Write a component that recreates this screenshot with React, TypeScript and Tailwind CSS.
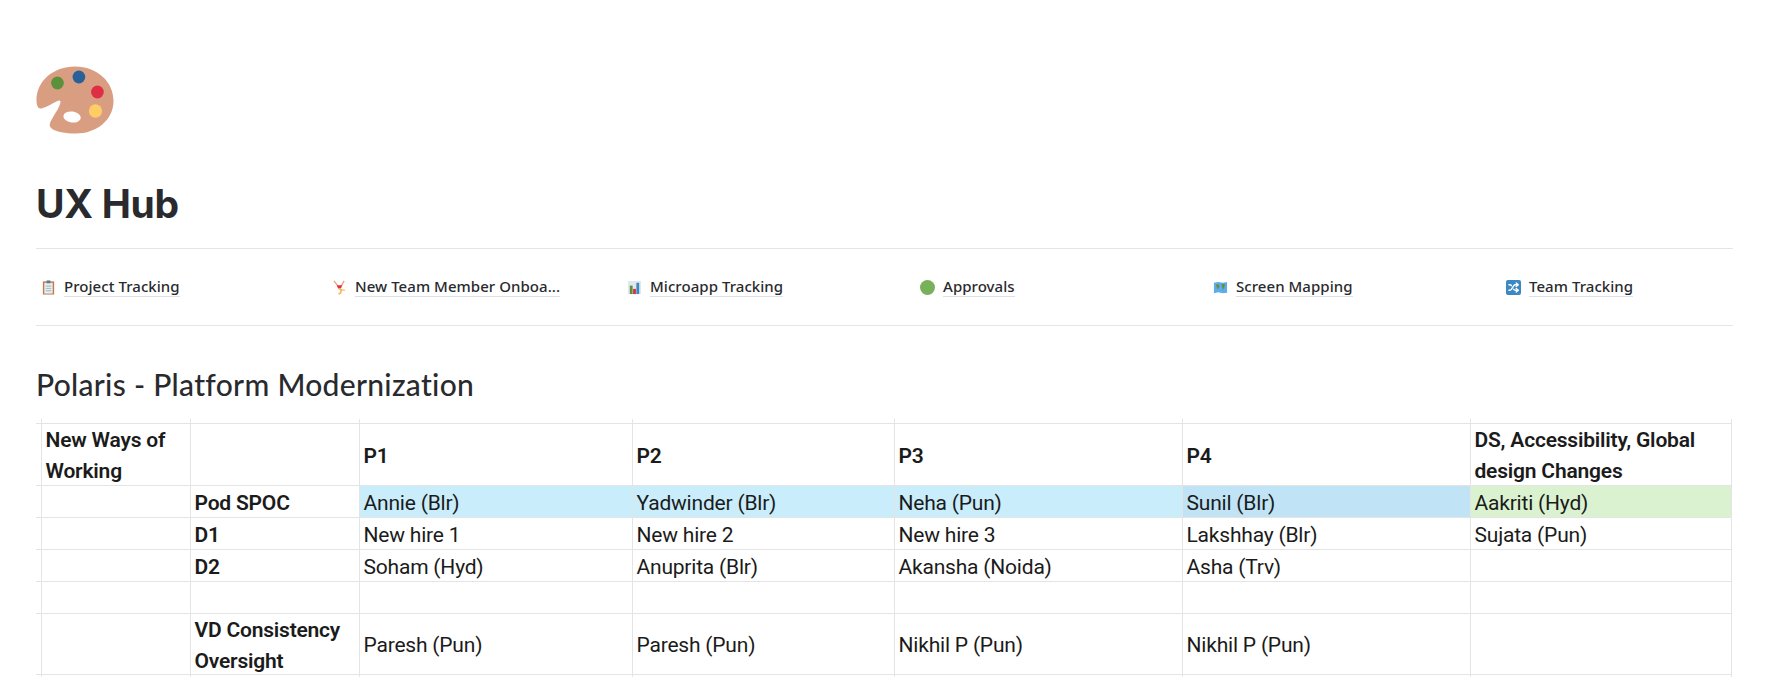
import React from 'react';
import { Shuffle } from 'lucide-react';

const Palette = () => (
  <svg viewBox="0 0 80 68" preserveAspectRatio="none" className="w-[78px] h-[68px]">
    <path
      d="M0.5 35C0 15 18 0.5 40 0.5C63 0.5 79.5 16 79.5 35C79.5 54 62 67.5 41 67.5C30 67.5 20 66 15.5 62C13 59.5 14 57 17 52C20 47 24 41 25 37C25.5 34 24 34 21 35.5C16 38 9 42 5 42.5C2 43 0.7 39 0.5 35Z"
      fill="#d99e82"
    />
    <ellipse cx="37" cy="51" rx="9" ry="5.5" fill="#fff" transform="rotate(8 37 51)" />
    <circle cx="22" cy="17" r="6.5" fill="#5c913b" />
    <circle cx="44" cy="11" r="6.5" fill="#2a6099" />
    <circle cx="63" cy="26" r="6.5" fill="#dd2e44" />
    <circle cx="61" cy="45" r="6.8" fill="#ffcc66" />
  </svg>
);

const Clipboard = () => (
  <svg viewBox="0 0 16 16" className="w-[15px] h-[15px]">
    <rect x="2" y="1.5" width="12" height="14" fill="#c1794a" />
    <rect x="3.5" y="3" width="9" height="11.5" fill="#e8eef0" />
    <rect x="6" y="0.5" width="4" height="3" fill="#66757f" />
    <rect x="5" y="6" width="6" height="1" fill="#8fb3c9" />
    <rect x="5" y="8.5" width="6" height="1" fill="#a7bccb" />
    <rect x="5" y="11" width="6" height="1" fill="#8fb3c9" />
  </svg>
);

const Cartwheel = () => (
  <svg viewBox="0 0 16 16" className="w-[15px] h-[15px]">
    <path d="M2 1L6 6" stroke="#e8a56b" strokeWidth="1.4" />
    <path d="M13 1L10 6" stroke="#e8a56b" strokeWidth="1.4" />
    <path d="M5 5.5H11L9.5 9H6.5Z" fill="#dd2e44" />
    <path d="M7 9L10 10.5L9 14L7 15" stroke="#f4b860" strokeWidth="1.8" fill="none" />
    <path d="M10 10.5L14 11" stroke="#f4b860" strokeWidth="1.2" />
  </svg>
);

const Chart = () => (
  <svg viewBox="0 0 16 16" className="w-[15px] h-[15px]">
    <rect x="1" y="1" width="14" height="14" fill="#dfe8ec" />
    <rect x="3" y="6" width="3" height="9" fill="#5c913b" />
    <rect x="6.5" y="9.5" width="3" height="5.5" fill="#dd2e44" />
    <rect x="10" y="3" width="3" height="12" fill="#3b88c3" />
  </svg>
);

const WorldMap = () => (
  <svg viewBox="0 0 16 16" className="w-[15px] h-[15px]">
    <path d="M1 3L5.5 2L10.5 3L15 2V13.5L10.5 14L5.5 13L1 14Z" fill="#5dadec" />
    <path d="M3 5L6 4.5L7 7L5 10L4 7.5ZM9 4L13 4.5L12 8L10.5 11L9.5 7Z" fill="#6a8f3a" />
  </svg>
);

const links = [
  { icon: <Clipboard />, label: 'Project Tracking', pad: 'pl-[4px]' },
  { icon: <Cartwheel />, label: 'New Team Member Onboa...', pad: 'pl-[2px]' },
  { icon: <Chart />, label: 'Microapp Tracking', pad: 'pl-[4px]' },
  { icon: <div className="w-[15px] h-[15px] rounded-full bg-[#78b159]" />, label: 'Approvals', pad: 'pl-[4px]' },
  { icon: <WorldMap />, label: 'Screen Mapping', pad: 'pl-[4px]' },
  {
    icon: (
      <div className="w-[15px] h-[15px] rounded-[2px] bg-[#3b88c3] flex items-center justify-center">
        <Shuffle className="w-[11px] h-[11px] text-white" strokeWidth={3} />
      </div>
    ),
    label: 'Team Tracking',
    pad: 'pl-[4px]',
  },
];

const rows = [
  { h: 'h-[62px]', bold: true, cells: ['New Ways of Working', '', 'P1', 'P2', 'P3', 'P4', 'DS, Accessibility, Global design Changes'] },
  { h: 'h-[32px]', cells: ['', 'Pod SPOC', 'Annie (Blr)', 'Yadwinder (Blr)', 'Neha (Pun)', 'Sunil (Blr)', 'Aakriti (Hyd)'] },
  { h: 'h-[32px]', cells: ['', 'D1', 'New hire 1', 'New hire 2', 'New hire 3', 'Lakshhay (Blr)', 'Sujata (Pun)'] },
  { h: 'h-[32px]', cells: ['', 'D2', 'Soham (Hyd)', 'Anuprita (Blr)', 'Akansha (Noida)', 'Asha (Trv)', ''] },
  { h: 'h-[32px]', cells: ['', '', '', '', '', '', ''] },
  { h: 'h-[61px]', cells: ['', 'VD Consistency Oversight', 'Paresh (Pun)', 'Paresh (Pun)', 'Nikhil P (Pun)', 'Nikhil P (Pun)', ''] },
];

const widths = ['w-[149px]', 'w-[169px]', 'w-[273px]', 'w-[262px]', 'w-[288px]', 'w-[288px]', 'w-[261px]'];

const cellBg = (r: number, c: number) => {
  if (r !== 1) return '';
  if (c === 5) return 'bg-[#c0e4f5]';
  if (c === 6) return 'bg-[#daf2d0]';
  if (c >= 2) return 'bg-[#caedfb]';
  return '';
};

// the vertical grid lines poke out a little above and below the table
const StubRow = ({ h }: { h: string }) => (
  <tr className={h}>
    <td className="p-0" />
    {widths.map((w) => (
      <td key={w} className="p-0 border-x border-[#e4e4e4]" />
    ))}
  </tr>
);

export default function App() {
  return (
    <div className="w-[1774px] h-[691px] overflow-hidden bg-white text-[#292a2e] font-['Noto_Sans',sans-serif]">
      <div className="ml-[36px] w-[1697px] pt-[66px]">
        <Palette />

        <h1 className="mt-[46px] text-[39px] leading-[48px] font-bold font-['Inter',sans-serif] tracking-[-0.3px]">UX Hub</h1>

        <div className="mt-[20px] h-[78px] border-y border-[#e4e5e8] grid grid-cols-[repeat(6,293px)] items-center">
          {links.map((link) => (
            <div key={link.label} className={`flex items-center gap-[8px] ${link.pad}`}>
              <span className="w-[16px] flex justify-center">{link.icon}</span>
              <span className="text-[15px] leading-[19px] font-medium tracking-[0.05px] border-b border-[#dcdfe4] whitespace-nowrap">{link.label}</span>
            </div>
          ))}
        </div>

        <h2 className="mt-[40px] text-[30px] leading-[36px] font-medium tracking-[0.3px] font-['Lato',sans-serif] text-[#292a2e]">
          Polaris - Platform Modernization
        </h2>

        <table className="mt-[17px] border-collapse table-fixed font-['Roboto',sans-serif] text-[21px] leading-[31px] tracking-[-0.2px] text-[#1b1b1b]">
          <colgroup>
            <col className="w-[5px]" />
            {widths.map((w) => (
              <col key={w} className={w} />
            ))}
          </colgroup>
          <tbody>
            <StubRow h="h-[4px]" />
            {rows.map((row, r) => (
              <tr key={r} className={row.h}>
                <td className="border-y border-[#e4e4e4]" />
                {row.cells.map((cell, c) => (
                  <td
                    key={c}
                    className={`border border-[#e4e4e4] pl-[4px] pr-[2px] py-0 ${cellBg(r, c)} ${
                      row.bold || c < 2 ? 'font-semibold' : 'font-normal'
                    }`}
                  >
                    <div className="-mb-[4px]">{cell}</div>
                  </td>
                ))}
              </tr>
            ))}
            <StubRow h="h-[3px]" />
          </tbody>
        </table>
      </div>
    </div>
  );
}
